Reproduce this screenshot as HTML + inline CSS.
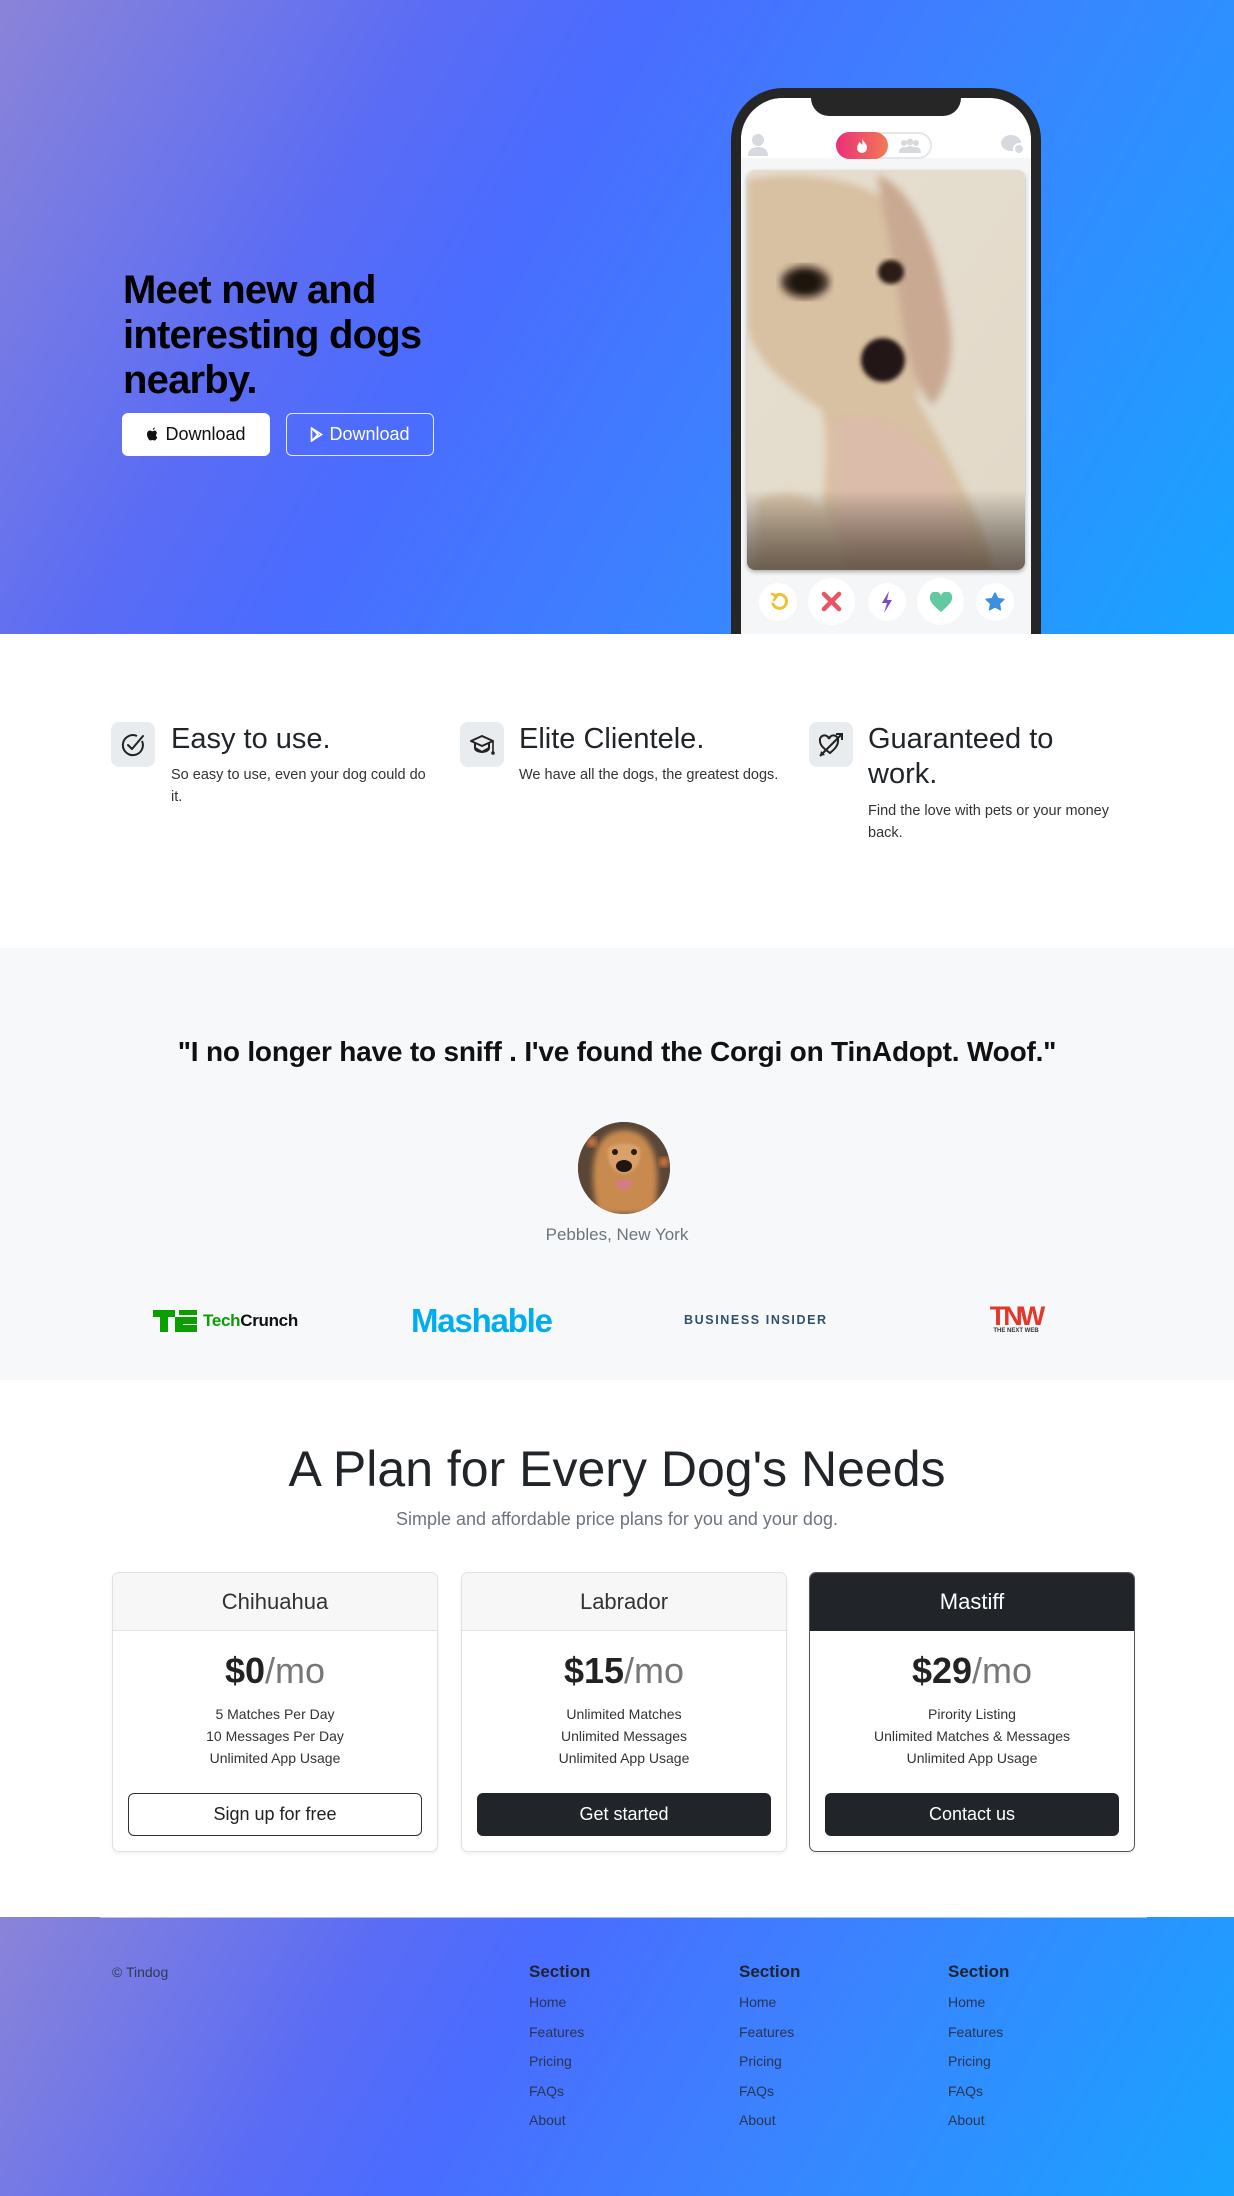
<!DOCTYPE html>
<html><head><meta charset="utf-8"><style>
*{margin:0;padding:0;box-sizing:border-box}
body{width:1234px;height:2196px;position:relative;font-family:"Liberation Sans",sans-serif;background:#fff;overflow:hidden;color:#212529}
.grad{background:linear-gradient(120deg,#8b84d8 0%,#5a6cf5 28%,#4a6cff 40%,#3a84ff 65%,#18a4ff 100%)}
.abs{position:absolute}
.btn{position:absolute;border-radius:6px;font-size:18px;display:flex;align-items:center;justify-content:center;gap:6px}
.feat-ic{position:absolute;width:44px;height:45px;border-radius:8px;background:#e9ecef;display:flex;align-items:center;justify-content:center}
.ft{position:absolute;font-size:29px;color:#212529;line-height:35px}
.fd{position:absolute;font-size:14.5px;color:#333;line-height:22px}
.card{position:absolute;top:1572px;width:326px;height:280px;border:1px solid #dfe1e4;border-radius:7px;overflow:hidden;box-shadow:0 2px 3px rgba(0,0,0,.06);background:#fff;text-align:center}
.card .hd{height:58px;background:#f7f7f7;border-bottom:1px solid #dfe1e4;font-size:22px;line-height:58px;color:#333}
.card .pr{margin-top:18px;font-size:36px;line-height:44px;font-weight:bold;color:#222}
.card .pr span{font-weight:normal;color:#777}
.card ul{list-style:none;margin-top:10px;font-size:14px;line-height:22px;color:#333}
.card .b{position:absolute;left:15px;right:15px;top:220px;height:43px;border-radius:6px;font-size:18px;line-height:41px}
.fs{position:absolute;top:1962px;font-size:17px;font-weight:bold;color:#1f2430}
.fl{position:absolute;font-size:14px;color:#2a3550;line-height:29.5px;top:1988px}
</style></head><body>

<!-- HERO -->
<div class="abs grad" style="left:0;top:0;width:1234px;height:634px;overflow:hidden">
<div class="abs" style="left:123px;top:268px;font-size:40px;font-weight:bold;line-height:45px;color:#000;letter-spacing:-0.8px">Meet new and<br>interesting dogs<br>nearby.</div>
<div class="btn" style="left:122px;top:413px;width:148px;height:43px;background:#fff;color:#111"><svg width="13" height="15" viewBox="0 0 13 15"><path d="M9 3.5c-1.2 0-1.8.7-2.6.7S5 3.5 4 3.5C2.3 3.5 1 5 1 7.3 1 10 3 13.5 4.3 13.5c.9 0 1.2-.5 2.2-.5s1.2.5 2.1.5c1 0 2.2-1.9 2.7-3.3C9.8 9.6 9.7 7 11 6.2 10.4 4.2 9.6 3.5 9 3.5zM8.8.5c.1 1-.8 2.3-1.9 2.3-.1-1 .8-2.2 1.9-2.3z" fill="#111"/></svg>Download</div>
<div class="btn" style="left:286px;top:413px;width:148px;height:43px;border:1px solid rgba(255,255,255,.85);color:#fff"><svg width="13" height="15" viewBox="0 0 13 15"><path d="M1.5 1 L11.5 7.5 L1.5 14 Z M1.5 1 L8 7.5 L1.5 14" fill="none" stroke="#fff" stroke-width="1.6"/></svg>Download</div>

<!-- PHONE -->
<div class="abs" style="left:731px;top:88px;width:310px;height:560px;background:#262626;border-radius:52px 52px 0 0"></div>
<div class="abs" style="left:741px;top:98px;width:290px;height:536px;background:#f5f6f8;border-radius:42px 42px 0 0;overflow:hidden">
  <div class="abs" style="left:0;top:0;width:290px;height:60px;background:#fff"></div>
  <div class="abs" style="left:70px;top:-2px;width:150px;height:20px;background:#262626;border-radius:0 0 18px 18px"></div>
  <svg class="abs" style="left:6px;top:35px" width="22" height="24" viewBox="0 0 22 24"><circle cx="11" cy="7" r="6" fill="#d6d9de"/><path d="M1 23c0-6 4-9 10-9s10 3 10 9z" fill="#d6d9de"/></svg>
  <div class="abs" style="left:95px;top:34px;width:96px;height:27px;border:2px solid #e4e6ea;border-radius:14px;background:#fff"></div>
  <div class="abs" style="left:95px;top:34px;width:52px;height:27px;border-radius:14px;background:linear-gradient(90deg,#ea2f7a,#f27a54)"></div>
  <svg class="abs" style="left:114px;top:39px" width="14" height="17" viewBox="0 0 14 17"><path d="M7 1C8 5 12 6 12 11a5 5 0 0 1-10 0c0-3 2-4 2-6 2 1 3 3 3 3 1-2 0-5 0-7z" fill="#fff"/></svg>
  <svg class="abs" style="left:157px;top:40px" width="24" height="16" viewBox="0 0 24 16"><circle cx="6" cy="5" r="3" fill="#d6d9de"/><circle cx="18" cy="5" r="3" fill="#d6d9de"/><circle cx="12" cy="4" r="3.4" fill="#d6d9de"/><path d="M1 15c0-4 2-6 5-6s5 2 5 6zM13 15c0-4 2-6 5-6s5 2 5 6zM6 15c0-5 3-7 6-7s6 2 6 7z" fill="#d6d9de"/></svg>
  <svg class="abs" style="left:259px;top:36px" width="26" height="22" viewBox="0 0 26 22"><ellipse cx="11" cy="9" rx="10" ry="8" fill="#d6d9de"/><circle cx="19" cy="15" r="5" fill="#d6d9de" stroke="#fff" stroke-width="2"/></svg>
  <div class="abs" style="left:6px;top:72px;width:278px;height:400px;border-radius:8px;overflow:hidden;box-shadow:0 2px 4px rgba(0,0,0,.3)">
    <svg width="278" height="400" viewBox="0 0 278 400">
      <defs>
        <linearGradient id="bg" x1="0" y1="0" x2="1" y2="1"><stop offset="0" stop-color="#e6dfd0"/><stop offset="1" stop-color="#e2d8c8"/></linearGradient>
        <linearGradient id="sh" x1="0" y1="0" x2="0" y2="1"><stop offset="0.8" stop-color="#000" stop-opacity="0"/><stop offset="1" stop-color="#3a2e22" stop-opacity=".7"/></linearGradient>
        <filter id="bl"><feGaussianBlur stdDeviation="4"/></filter>
        <filter id="bl2"><feGaussianBlur stdDeviation="2"/></filter>
      </defs>
      <rect width="278" height="400" fill="url(#bg)"/>
      <g filter="url(#bl)">
        <path d="M0 10 C40 0 120 5 150 40 C170 80 180 150 170 230 C210 300 240 360 245 400 L70 400 C75 330 85 280 75 240 C30 210 0 180 0 150 Z" fill="#d8c0a2"/>
        <path d="M130 5 C165 15 190 80 198 130 C212 180 200 220 185 235 C160 205 155 150 150 110 Z" fill="#c9a992"/>
        <path d="M90 250 C125 240 170 260 195 300 C215 350 225 380 225 400 L90 400 Z" fill="#dbbcaa"/>
        <path d="M10 330 C50 310 90 330 100 400 L10 400 Z" fill="#dcc7ad"/>
      </g>
      <ellipse cx="58" cy="112" rx="24" ry="16" fill="#3a2a20" filter="url(#bl)"/>
      <ellipse cx="58" cy="112" rx="14" ry="10" fill="#1c120d" filter="url(#bl2)"/>
      <ellipse cx="144" cy="102" rx="13" ry="12" fill="#2a1b14" filter="url(#bl2)"/>
      <ellipse cx="136" cy="190" rx="22" ry="22" fill="#221612" filter="url(#bl2)"/>
      <rect width="278" height="400" fill="url(#sh)"/>
    </svg>
  </div>
  <div class="abs" style="left:18px;top:485px;width:38px;height:38px;border-radius:50%;background:#fff"></div>
  <svg class="abs" style="left:28px;top:494px" width="20" height="20" viewBox="0 0 20 20"><path d="M6 4 A7 7 0 1 1 4 12" fill="none" stroke="#f0c134" stroke-width="3" stroke-linecap="round"/><path d="M3 2 L8 4 L5 8" fill="none" stroke="#f0c134" stroke-width="2.6" stroke-linecap="round" stroke-linejoin="round"/></svg>
  <div class="abs" style="left:67px;top:480px;width:47px;height:47px;border-radius:50%;background:#fff"></div>
  <svg class="abs" style="left:80px;top:493px" width="21" height="21" viewBox="0 0 21 21"><path d="M3 3L18 18M18 3L3 18" stroke="#ec5164" stroke-width="4.5" stroke-linecap="round"/></svg>
  <div class="abs" style="left:127px;top:485px;width:38px;height:38px;border-radius:50%;background:#fff"></div>
  <svg class="abs" style="left:138px;top:492px" width="16" height="24" viewBox="0 0 16 24"><path d="M10 1 L3 13 L8 13 L5 23 L13 10 L8 10 Z" fill="#7b4bc4"/></svg>
  <div class="abs" style="left:176px;top:480px;width:47px;height:47px;border-radius:50%;background:#fff"></div>
  <svg class="abs" style="left:188px;top:494px" width="24" height="21" viewBox="0 0 24 21"><path d="M12 20 C4 13 1 10 1 6 A5 5 0 0 1 12 4 A5 5 0 0 1 23 6 C23 10 20 13 12 20Z" fill="#62c9a0"/></svg>
  <div class="abs" style="left:235px;top:485px;width:38px;height:38px;border-radius:50%;background:#fff"></div>
  <svg class="abs" style="left:244px;top:494px" width="20" height="20" viewBox="0 0 20 20"><path d="M10 1l2.7 5.6 6.1.8-4.5 4.2 1.1 6.1L10 14.8 4.6 17.7l1.1-6.1L1.2 7.4l6.1-.8z" fill="#3d8fe0" stroke="#3d8fe0" stroke-linejoin="round" stroke-width="1.5"/></svg>
</div>
</div>

<!-- FEATURES -->
<div class="feat-ic" style="left:111px;top:722px"><svg width="26" height="26" viewBox="0 0 26 26"><path d="M22 9 A10 10 0 1 1 17 4" fill="none" stroke="#222" stroke-width="2"/><path d="M8 13 L12 17 L23 4" fill="none" stroke="#222" stroke-width="2" stroke-linecap="round" stroke-linejoin="round"/></svg></div>
<div class="ft" style="left:171px;top:722px">Easy to use.</div>
<div class="fd" style="left:171px;top:764px;width:268px">So easy to use, even your dog could do it.</div>

<div class="feat-ic" style="left:460px;top:722px"><svg width="26" height="26" viewBox="0 0 26 26"><path d="M13 4 L24 9 L13 14 L2 9 Z" fill="none" stroke="#222" stroke-width="2" stroke-linejoin="round"/><path d="M6 11v5c0 2 3 4 7 4s7-2 7-4v-5" fill="none" stroke="#222" stroke-width="2"/><path d="M6 16 L13 20 L20 16" fill="none" stroke="#222" stroke-width="2"/><path d="M24 9v11" stroke="#222" stroke-width="1.6"/><circle cx="24" cy="21" r="1.8" fill="#222"/></svg></div>
<div class="ft" style="left:519px;top:722px">Elite Clientele.</div>
<div class="fd" style="left:519px;top:764px;width:300px">We have all the dogs, the greatest dogs.</div>

<div class="feat-ic" style="left:809px;top:722px"><svg width="28" height="28" viewBox="0 0 28 28"><path d="M13 22 C6 17 3 14 3 10 A4.5 4.5 0 0 1 12 8 A4.5 4.5 0 0 1 21 10 C21 14 19 17 13 22Z" fill="none" stroke="#222" stroke-width="2"/><path d="M3 25 L25 3" stroke="#222" stroke-width="2"/><path d="M19 3h6v6" fill="none" stroke="#222" stroke-width="2"/><path d="M3 25 l1-5 4 4z" fill="#222"/></svg></div>
<div class="ft" style="left:868px;top:722px;width:240px">Guaranteed to<br>work.</div>
<div class="fd" style="left:868px;top:800px;width:260px">Find the love with pets or your money back.</div>

<!-- TESTIMONIAL -->
<div class="abs" style="left:0;top:948px;width:1234px;height:432px;background:#f7f8fa"></div>
<div class="abs" style="left:0;top:1036px;width:1234px;text-align:center;font-size:28px;font-weight:bold;color:#111;letter-spacing:-0.2px">"I no longer have to sniff . I've found the Corgi on TinAdopt. Woof."</div>
<div class="abs" style="left:578px;top:1122px;width:92px;height:92px;border-radius:50%;overflow:hidden;background:#4a3a30">
  <svg width="92" height="92" viewBox="0 0 92 92"><defs><filter id="b2"><feGaussianBlur stdDeviation="3"/></filter><filter id="b3"><feGaussianBlur stdDeviation="1.2"/></filter></defs>
  <rect width="92" height="92" fill="#5a4636"/>
  <circle cx="14" cy="20" r="5" fill="#e07a40" filter="url(#b2)"/><circle cx="86" cy="40" r="5" fill="#e07a40" filter="url(#b2)"/>
  <g filter="url(#b2)"><path d="M46 8 C28 8 18 22 16 40 C12 60 20 92 20 92 L76 92 C76 92 82 60 78 40 C74 20 64 8 46 8Z" fill="#c98a50"/></g>
  <path d="M30 26 C36 20 56 20 62 26 C64 40 58 50 46 52 C34 50 28 40 30 26Z" fill="#d9a06a" filter="url(#b3)"/>
  <circle cx="37" cy="30" r="3" fill="#2a1a12"/><circle cx="56" cy="30" r="3" fill="#2a1a12"/>
  <ellipse cx="46" cy="44" rx="8" ry="6" fill="#1e1410"/>
  <path d="M38 58 C38 72 54 72 54 58Z" fill="#d77a88"/></svg>
</div>
<div class="abs" style="left:0;top:1225px;width:1234px;text-align:center;font-size:17px;color:#6c757d">Pebbles, New York</div>

<!-- LOGOS -->
<div class="abs" style="left:153px;top:1309px;height:24px;display:flex;align-items:center;gap:6px">
  <svg width="44" height="22" viewBox="0 0 44 22"><path d="M0 0h22v7h-7v15h-8V7H0z" fill="#0a9e01"/><path d="M22 7h22v7H30v1h14v7H22z" fill="#0a9e01"/><path d="M26 0h18v5H26z" fill="#0a9e01"/></svg>
  <span style="font-weight:bold;font-size:17px;color:#111;letter-spacing:-0.3px"><span style="color:#0a9e01">Tech</span>Crunch</span>
</div>
<div class="abs" style="left:411px;top:1303px;font-size:33px;font-weight:bold;color:#00aeef;letter-spacing:-1.2px;line-height:36px">Mashable</div>
<div class="abs" style="left:684px;top:1313px;font-size:12.5px;font-weight:bold;color:#30506b;letter-spacing:1.6px">BUSINESS INSIDER</div>
<div class="abs" style="left:984px;top:1305px;width:64px;text-align:center">
  <div style="font-size:27px;font-weight:bold;color:#e4372b;letter-spacing:-3px;line-height:22px">TNW</div>
  <div style="font-size:6px;font-weight:bold;color:#333;line-height:8px">THE NEXT WEB</div>
</div>

<!-- PRICING -->
<div class="abs" style="left:0;top:1438px;width:1234px;text-align:center;font-size:50px;color:#212529;line-height:62px">A Plan for Every Dog's Needs</div>
<div class="abs" style="left:0;top:1509px;width:1234px;text-align:center;font-size:18px;color:#6c757d">Simple and affordable price plans for you and your dog.</div>

<div class="card" style="left:112px">
  <div class="hd">Chihuahua</div>
  <div class="pr">$0<span>/mo</span></div>
  <ul><li>5 Matches Per Day</li><li>10 Messages Per Day</li><li>Unlimited App Usage</li></ul>
  <div class="b" style="border:1px solid #333;color:#222">Sign up for free</div>
</div>
<div class="card" style="left:461px">
  <div class="hd">Labrador</div>
  <div class="pr">$15<span>/mo</span></div>
  <ul><li>Unlimited Matches</li><li>Unlimited Messages</li><li>Unlimited App Usage</li></ul>
  <div class="b" style="background:#212529;color:#fff;line-height:43px">Get started</div>
</div>
<div class="card" style="left:809px;border-color:#555">
  <div class="hd" style="background:#212529;color:#fff;border-color:#212529">Mastiff</div>
  <div class="pr">$29<span>/mo</span></div>
  <ul><li>Pirority Listing</li><li>Unlimited Matches &amp; Messages</li><li>Unlimited App Usage</li></ul>
  <div class="b" style="background:#212529;color:#fff;line-height:43px">Contact us</div>
</div>

<!-- FOOTER -->
<div class="abs grad" style="left:0;top:1917px;width:1234px;height:279px"></div>
<div class="abs" style="left:100px;top:1916px;width:1047px;height:2px;background:rgba(255,255,255,.5)"></div>
<div class="abs" style="left:112px;top:1964px;font-size:14px;color:#2f3a55">© Tindog</div>
<div class="fs" style="left:529px">Section</div>
<div class="fs" style="left:739px">Section</div>
<div class="fs" style="left:948px">Section</div>
<div class="fl" style="left:529px">Home<br>Features<br>Pricing<br>FAQs<br>About</div>
<div class="fl" style="left:739px">Home<br>Features<br>Pricing<br>FAQs<br>About</div>
<div class="fl" style="left:948px">Home<br>Features<br>Pricing<br>FAQs<br>About</div>
</body></html>
